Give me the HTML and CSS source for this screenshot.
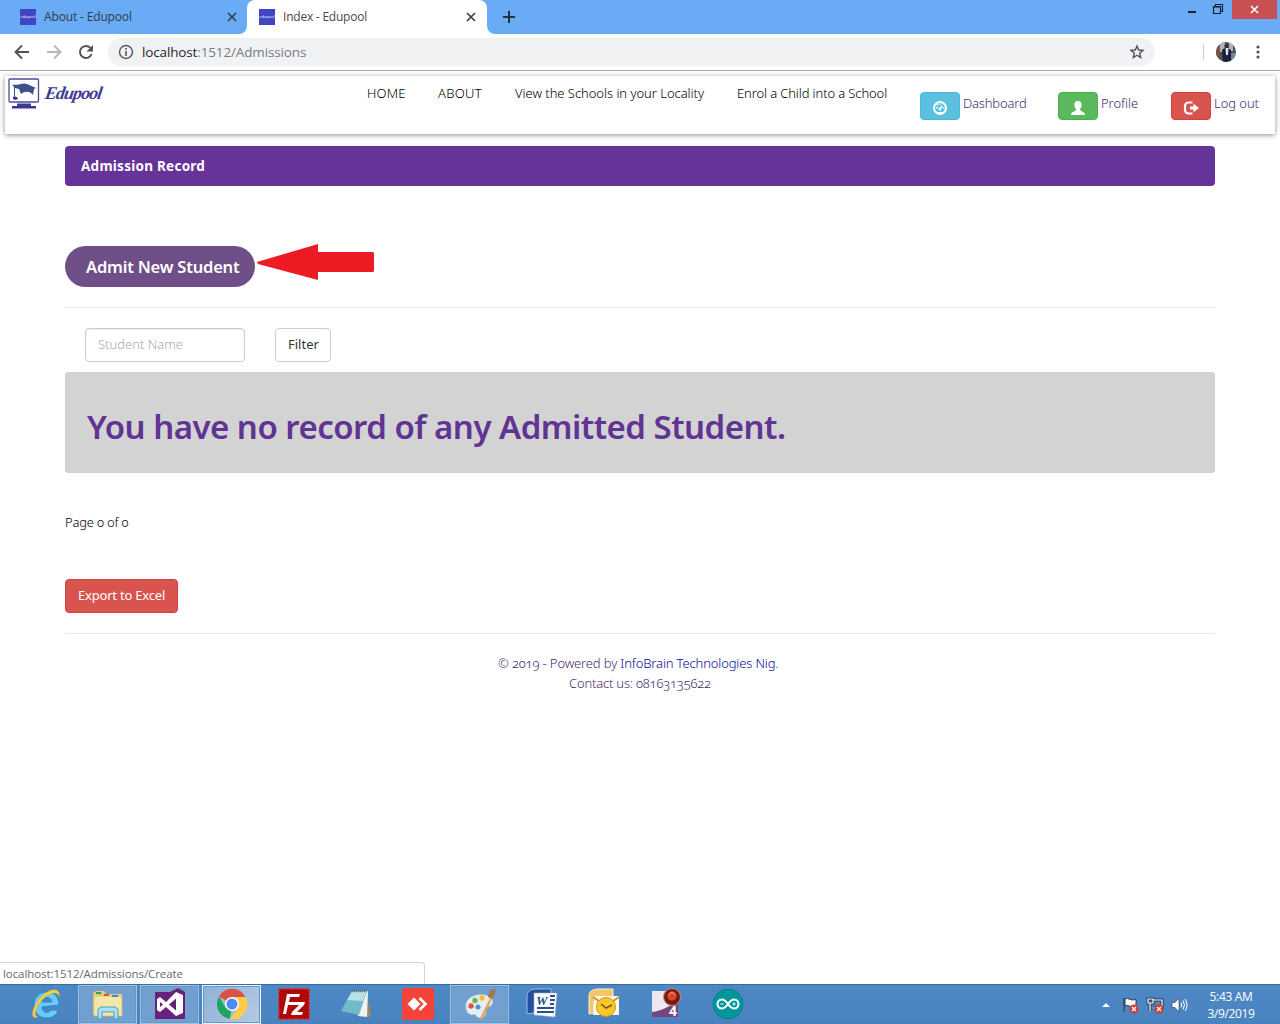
FILE: index.html
```html
<!DOCTYPE html>
<html lang="en">
<head>
<meta charset="utf-8">
<title>Index - Edupool</title>
<link rel="stylesheet" href="styles.css">
</head>
<body>
<div class="screen">
  <header class="tabstrip">
    <div class="tab"><span class="favicon">edupool</span><span class="tab-title">About - Edupool</span>
      <svg class="tab-close" width="10" height="10" viewBox="0 0 10 10"><path d="M1 1l8 8M9 1L1 9"/></svg></div>
    <div class="tab active"><span class="favicon">edupool</span><span class="tab-title t2">Index - Edupool</span>
      <svg class="tab-close" width="10" height="10" viewBox="0 0 10 10"><path d="M1 1l8 8M9 1L1 9"/></svg></div>
    <div class="strip-rest">
    <svg class="plus" width="12" height="12" viewBox="0 0 12 12"><path d="M6 0v12M0 6h12"/></svg>
    <div class="window-buttons">
      <svg width="44" height="19" viewBox="0 0 44 19"><path d="M0 11h8v2H0z" fill="#15212f"/><path d="M25.500 6.500h7v7h-7zM25 7h8M27.500 6V4.500h7v7H33" fill="none" stroke="#15212f" stroke-width="1.200"/></svg>
      <span class="win-close"><svg width="9" height="9" viewBox="0 0 9 9"><path d="M1 1l7 7M8 1L1 8" stroke="#fff" stroke-width="1.600"/></svg></span>
    </div>
    </div>
  </header>
  <div class="toolbar">
    <svg class="nav-icons" width="108" height="36" viewBox="0 0 108 36" fill="none" stroke="#505357" stroke-width="1.900">
      <path d="M29 18H16M22 11.500L15.500 18l6.500 6.500"/>
      <path d="M47 18h13M54 11.500l6.500 6.500-6.500 6.500" stroke="#b5b7ba"/>
      <path d="M90.500 14A6 6 0 1 0 91.600 20"/><path d="M93 11v6.500h-6.500z" fill="#505357" stroke="none"/>
    </svg>
    <div class="address">
      <svg width="16" height="16" viewBox="0 0 16 16"><circle cx="8" cy="8" r="6.500" fill="none" stroke="#55585c" stroke-width="1.400"/><path d="M7.200 7h1.600v5H7.200zM7.200 4h1.600v1.700H7.200z" fill="#55585c"/></svg>
      <span class="url"><span class="host">localhost</span>:1512/Admissions</span>
      <svg class="star" width="16" height="16" viewBox="0 0 16 16"><path d="M8 2l1.700 4 4.300.3-3.300 2.900 1 4.300L8 11.200l-3.700 2.300 1-4.300L2 6.300 6.300 6z" fill="none" stroke="#505357" stroke-width="1.400"/></svg>
    </div>
    <span class="separator"></span>
    <svg class="avatar" width="20" height="20" viewBox="0 0 20 20"><defs><clipPath id="face"><circle cx="10" cy="10" r="10"/></clipPath></defs><g clip-path="url(#face)"><path fill="#4b5260" d="M0 0h20v20H0z"/><path fill="#80503f" d="M0 4h4v12H0z"/><path fill="#aeb5ba" d="M4 0h5v10H4zM13 1h4v8h-4z"/><path fill="#1c2138" d="M6 8l4-3 5 3v12H7z"/><circle cx="10.500" cy="4" r="2.200" fill="#3c2e2d"/><path fill="#d7e5f4" d="M9.500 6h3l-.5 7h-2z"/><path fill="#71849b" d="M15 11h4v6h-4z"/></g></svg>
    <svg class="dots" width="4" height="14" viewBox="0 0 4 14" fill="#505357"><circle cx="2" cy="2" r="1.600"/><circle cx="2" cy="7" r="1.600"/><circle cx="2" cy="12" r="1.600"/></svg>
  </div>

  <main class="page">
    <nav class="navbar">
      <div class="brand">
        <svg width="32" height="32" viewBox="0 0 32 32"><rect x="1" y="1" width="29.500" height="23" rx="1" fill="#fff" stroke="#4d4b98" stroke-width="1.300"/><path d="M4 6.500C10 8 15 4 19 6l9 4-2 1c0 2-1 4-1 6-3-4-8-4-12-1l-2-5-4-1v8l2 3H5l1-3V9z" fill="#3d508b"/><path d="M5 19h4l1 2-3 1-2-1z" fill="#3b378f"/><path d="M9 25.500h14V28h5v2.500H4V28h5z" fill="#3d3a91"/></svg>
        <span class="wordmark">Edupool</span>
      </div>
      <a class="link home">HOME</a><a class="link about">ABOUT</a><a class="link schools">View the Schools in your Locality</a><a class="link enrol">Enrol a Child into a School</a>
      <a class="account dashboard"><span class="badge blue"><svg width="16" height="16" viewBox="0 0 16 16"><circle cx="8" cy="8" r="6" fill="none" stroke="#fff" stroke-width="2"/><path d="M7.500 3h1v2h-1zM4 7h2v1.200H4zM10.500 7h2v1.200h-2zM4.500 4.500l1-.8 1 1.300-1 .8zM7 8l3.500-3.500L9 9.500A1.300 1.300 0 1 1 7 8zM5 12h6v1H5z" fill="#fff"/></svg></span><span class="account-text">Dashboard</span></a>
      <a class="account profile"><span class="badge green"><svg width="16" height="16" viewBox="0 0 16 16"><path d="M8 1c2.500 0 3.600 1.500 3.600 4 0 1.800-.7 3-1.500 4v1.300c0 .8 5 1.500 5 4.700H1c0-3.200 4.900-3.900 4.900-4.700V9c-.8-1-1.500-2.200-1.500-4C4.400 2.500 5.500 1 8 1z" fill="#fff"/></svg></span><span class="account-text">Profile</span></a>
      <a class="account logout"><span class="badge red"><svg width="16" height="16" viewBox="0 0 16 16"><path d="M9.500 2.500H5.500a3.500 3.500 0 0 0-3.500 3.500v4a3.500 3.500 0 0 0 3.500 3.500h4" fill="none" stroke="#fff" stroke-width="2.200"/><path d="M7 6.500h3.500V3.700L16 8l-5.500 4.300V9.500H7z" fill="#fff"/></svg></span><span class="account-text">Log out</span></a>
    </nav>

    <div class="container">
      <h1 class="panel-title"><span>Admission Record</span></h1>
      <div class="admit-row">
        <a class="admit"><span>Admit New Student</span></a>
        <svg width="118" height="36" viewBox="0 0 118 36"><path d="M0 18L61 0v8h55l1 1v18l-1 1H61v8L1 20z" fill="#ed1c24"/></svg>
      </div>
      <div class="filters"><span class="field"><span>Student Name</span></span><a class="filter"><span>Filter</span></a></div>
      <div class="well"><h2><span>You have no record of any Admitted Student.</span></h2></div>
      <p class="pages"><span>Page 0 of 0</span></p>
      <a class="export"><span>Export to Excel</span></a>
      <footer class="footer">
        <p class="powered">© 2019 - Powered by <a>InfoBrain Technologies Nig.</a></p>
        <p class="contact">Contact us: 08163135622</p>
      </footer>
    </div>
    <div class="status"><span>localhost:1512/Admissions/Create</span></div>
  </main>

  <div class="taskbar">
    <div class="task"><svg viewBox="0 0 32 32"><path d="M29 17c0-8-5-13-12-13S4 9 4 17s5 13 13 13c5 0 10-3 11-8h-7c-2 4-9 3-9-3zM12 14c1-6 9-6 10 0z" fill="#6bcbf4" stroke="#258bd0"/><path d="M8 29C-1 33 2 18 11 9 21-1 31 0 29 9c0-6-8-5-15 1S2 28 8 29z" fill="#f4d34b" stroke="#d4a922" stroke-width=".5"/></svg></div>
    <div class="task open"><svg viewBox="0 0 32 32"><path d="M1 5l3-2h8l2 3h16v21H1z" fill="#e5cd78"/><path d="M2 8h28v20H2z" fill="#f6e6a8" stroke="#d3b966" stroke-width=".7"/><path d="M4 4h5v2H4z" fill="#28a64c"/><path d="M12 6h5v2h-5z" fill="#d95737"/><path d="M20 7h6v2h-6z" fill="#3a8cc8"/><path d="M6 31V21l3-2h14l3 2v10h-4v-7H10v7z" fill="#a6e0f2" stroke="#4c9fc5"/></svg></div>
    <div class="task open"><svg viewBox="0 0 32 32"><path d="M1 4h15l8-4 7 4v27H1z" fill="#68217a"/><path d="M3 11l3-2 6 5L22 4l7 3v18l-7 3-10-9-6 5-3-2zm3 3v5l3-2.500zm9 2.500l7 6v-12z" fill="#fff" fill-rule="evenodd"/></svg></div>
    <div class="task open current"><svg viewBox="0 0 32 32"><path d="M16 16L3 8.500A15 15 0 0 1 29.500 9H16z" fill="#dd5144"/><path d="M16 16l-2 15A15 15 0 0 1 3 8.500l6.500 11z" fill="#1fa463"/><path d="M29.500 9A15 15 0 0 1 14 31l8.500-11.500L20 9z" fill="#ffcd46"/><circle cx="16" cy="16" r="7" fill="#fff"/><circle cx="16" cy="16" r="5.500" fill="#4c8bf5"/></svg></div>
    <div class="task"><svg viewBox="0 0 32 32"><rect x=".7" y=".7" width="30.600" height="30.600" fill="#b00708" stroke="#d2424c" stroke-width="1.400" stroke-dasharray="2 1.500"/><path d="M5 26l4-20h13l-1 3h-9l-1 5h7l-1 3h-7l-2 9zM16 14h11l-1 3-7 7h6l-1 3H13l1-3 7-7h-6z" fill="#fff"/></svg></div>
    <div class="task"><svg viewBox="0 0 32 32"><path d="M27 8l4 19-4 3z" fill="#a38755"/><path d="M12 3h16l-1 26-9-1z" fill="#edf4f5"/><path d="M12 3h15l-8 24L1 23z" fill="#72bac8"/><path d="M12 4h14l-3 9-16-1z" fill="#b9e2e6"/><path d="M12 3h16" stroke="#61757d" stroke-width="2.500" stroke-dasharray="1 1"/></svg></div>
    <div class="task"><svg viewBox="0 0 32 32"><rect width="32" height="32" rx="3" fill="#f6433a"/><path d="M12 9.500l6.500 6.500-6.500 6.500L5.500 16z" fill="#fff"/><path d="M17.500 10l6 6-6 6" fill="none" stroke="#fff" stroke-width="2.600"/></svg></div>
    <div class="task open paint"><svg viewBox="0 0 32 32"><path d="M2 20C0 10 12 5 21 7c11 2 9 12 2 12-3 0-2 3-1 5 0 5-5 7-9 5-1-3-4-3-5-2-4-1-6-4-6-7z" fill="#e4eef4" stroke="#afc4d2"/><circle cx="7" cy="18" r="2.700" fill="#e35548"/><circle cx="11" cy="12.500" r="2.700" fill="#70b940"/><circle cx="18" cy="10" r="2.700" fill="#f5be37"/><circle cx="14" cy="19" r="2.500" fill="#588fc6"/><path d="M26 10l2 1-9 19-3 2 1-4z" fill="#e6a557"/><path d="M24 9c1-6 3-8 8-8-2 3 0 6-4 10z" fill="#a6764f"/></svg></div>
    <div class="task"><svg viewBox="0 0 32 32"><path d="M1 26V7c1-5 5-6 10-6h14v21z" fill="#264fa0" stroke="#9bbce7"/><path d="M8 5l23 0-2 24-21-2z" fill="#fff" stroke="#9daec2" stroke-width=".6"/><path d="M24 8h5M24 12h5M24 16h4M11 20h17M11 24h17" stroke="#2a4e8e" stroke-width="1.800"/><text x="10" y="17" class="word-letter">W</text></svg></div>
    <div class="task"><svg viewBox="0 0 32 32"><path d="M1 26V7c1-5 5-6 10-6h14v20z" fill="#f3c66c" stroke="#fff1c0"/><path d="M6 8h25v19H5z" fill="#fff9e8"/><path d="M5 9l13 9 13-9" fill="none" stroke="#c6912b" stroke-width="2"/><circle cx="18" cy="19" r="9.500" fill="#f6c82e" stroke="#d49317"/><path d="M13 16l5 4 6-3" fill="none" stroke="#79521b" stroke-width="1.500"/></svg></div>
    <div class="task"><svg viewBox="0 0 32 32"><path d="M2 3h26v26H2z" fill="#efe6f0"/><path d="M2 24c10-1 17-6 26-11v16H2z" fill="#78457c"/><circle cx="22" cy="9" r="8.500" fill="#791711" stroke="#bb9185"/><circle cx="22" cy="8" r="4.700" fill="#db4228"/><path d="M19 7c1-3 5-3 6 0" stroke="#f4ad74" fill="none"/><text x="19" y="28" class="four">4</text></svg></div>
    <div class="task"><svg viewBox="0 0 32 32"><circle cx="16" cy="16" r="15" fill="#00979c" stroke="#167d87"/><path d="M16 16c-2.500-3.500-4-4.500-6-4.500a4.500 4.500 0 0 0 0 9c2 0 3.500-1 6-4.500 2.500-3.500 4-4.500 6-4.500a4.500 4.500 0 0 1 0 9c-2 0-3.500-1-6-4.500z" fill="none" stroke="#fff" stroke-width="2"/><path d="M8.500 16h3M20.500 16h3M22 14.500v3" stroke="#fff"/></svg></div>
    <svg class="tray" width="90" height="20" viewBox="0 0 90 20"><path d="M0 12l4-4 4 4z" fill="#fff"/><path d="M22 3v14M23 4c4-2 6 3 11 0v7c-5 3-7-2-11 0z" fill="#fff" stroke="#24364d" stroke-width="1"/><path d="M46 4h5v4h-5zM48 8v8M51 5h9v8h-9" fill="none" stroke="#24364d" stroke-width="3"/><path d="M46 4h5v4h-5zM48 8v8M51 5h9v8h-9" fill="none" stroke="#fff" stroke-width="1.200"/><circle cx="32" cy="14" r="4.500" fill="#d83830"/><path d="M30 12l4 4M34 12l-4 4" stroke="#fff" stroke-width="1.400"/><circle cx="57" cy="14" r="4.500" fill="#d83830"/><path d="M55 12l4 4M59 12l-4 4" stroke="#fff" stroke-width="1.400"/><path d="M70 7.500h3l4-4.500v14l-4-4.500h-3z" fill="#fff" stroke="#33485f" stroke-width=".7"/><path d="M79 7.500q1.500 2.500 0 5M81 5.500q3 4.500 0 9M83 4q4 6 0 12" fill="none" stroke="#fff"/></svg>
    <div class="clock"><span>5:43 AM</span><span>3/9/2019</span></div>
  </div>
</div>
</body>
</html>
```
FILE: styles.css
```css
* { box-sizing: border-box; }
body { margin: 0; font-family: "Noto Sans", sans-serif; font-size: 13px; color: #000; }
p, h1, h2 { margin: 0; }
svg { display: block; flex: none; }
.screen { width: 1280px; height: 1024px; overflow: hidden; display: flex; flex-direction: column; background: #fff; white-space: nowrap; }
.tabstrip { height: 34px; flex: none; display: flex; background: linear-gradient(#6aabf6 50%, #fff 50%); font-family: "Open Sans", sans-serif; }
.tab { width: 247px; display: flex; align-items: center; padding-left: 20px; background: #6aabf6; border-bottom-right-radius: 8px; }
.tab.active { width: 240px; padding-left: 12px; background: #fff; border-radius: 8px 8px 0 0; }
.strip-rest { flex: 1; display: flex; align-items: flex-start; background: #6aabf6; border-bottom-left-radius: 8px; }
.favicon { width: 16px; height: 16px; background: #4045c4; color: #fff; font-size: 4px; line-height: 15px; text-align: center; flex: none; }
.tab-title { margin-left: 8px; width: 183px; font-size: 12px; line-height: 16px; padding-bottom: 1px; color: #303b47; letter-spacing: -.15px; }
.tab-title.t2 { color: #45494d; letter-spacing: -.22px; }
.tab-close { stroke: #35414e; stroke-width: 1.700; fill: none; }
.plus { margin: 11px 0 0 16px; stroke: #28323d; stroke-width: 2; }
.window-buttons { display: flex; margin-left: auto; padding-right: 3px; }
.win-close { width: 45px; height: 19px; display: grid; place-items: center; background: #c75050; }
.toolbar { height: 37px; flex: none; display: flex; align-items: center; border-bottom: 1px solid #a9a9a9; }
.address { width: 1047px; height: 28px; border-radius: 14px; background: #f1f2f4; display: flex; align-items: center; padding: 0 10px; }
.url { margin-left: 8px; font: 13.500px "Open Sans", sans-serif; color: #777c83; letter-spacing: -.14px; }
.host { color: #25282b; }
.star { margin-left: auto; }
.separator { width: 1px; height: 16px; background: #c8cace; margin-left: 48px; }
.avatar { margin-left: 12px; }
.dots { margin-left: 20px; }
.page { height: 913px; flex: none; display: flex; flex-direction: column; }
.navbar { height: 58px; flex: none; margin: 5px 5px 0; display: flex; align-items: flex-start; box-shadow: 0 1px 5px rgba(0,0,0,.45); padding-top: 2px; font-weight: 350; }
.brand { width: 362px; display: flex; padding-left: 3px; }
.wordmark { margin-left: 5px; font: italic 700 18px/31px "Liberation Serif", serif; color: #3f3c91; letter-spacing: -.95px; transform: skewX(-9deg); transform-origin: left center; }
.link { padding-top: 6px; line-height: 18px; }
.home { width: 71px; letter-spacing: .2px; }
.about { width: 77px; letter-spacing: .3px; }
.schools { width: 222px; letter-spacing: -.04px; }
.enrol { width: 183px; letter-spacing: -.12px; }
.account { display: flex; padding-top: 14px; color: #452a6e; letter-spacing: -.18px; }
.dashboard { width: 138px; }
.profile { width: 113px; }
.profile, .logout { letter-spacing: -.06px; }
.badge { width: 40px; height: 28px; border: 1px solid; border-radius: 4px; display: grid; place-items: center; padding-top: 3px; }
.blue { background: #5bc0de; border-color: #46b8da; }
.green { background: #5cb85c; border-color: #4cae4c; }
.red { background: #d9534f; border-color: #d43f3a; }
.account-text { margin-left: 3px; line-height: 23px; }
.container { width: 1150px; margin: 12px 0 0 65px; }
.panel-title { height: 40px; border-radius: 4px; background: #663399; color: #fff; padding-left: 16px; font-size: 13.500px; line-height: 40px; font-weight: 700; letter-spacing: .26px; }
.admit-row { height: 122px; padding-top: 58px; display: flex; gap: 2px; border-bottom: 1px solid #eaeaea; }
.admit { width: 190px; height: 41px; margin-top: 2px; border-radius: 21px; background: #6f4f88; color: #fff; font-size: 16.500px; font-weight: 600; line-height: 42px; padding-left: 21px; letter-spacing: -.2px; }
.filters { height: 64px; padding: 20px 0 0 20px; display: flex; gap: 30px; }
.field { width: 160px; height: 34px; border: 1px solid #ccc; border-radius: 4px; padding-left: 12px; line-height: 31px; color: #aaa; font-weight: 300; box-shadow: inset 0 1px 1px rgba(0,0,0,.08); }
.filter { width: 56px; height: 34px; border: 1px solid #ccc; border-radius: 4px; padding-left: 12px; line-height: 31px; color: #333; }
.well { height: 101px; border-radius: 4px; background: #d3d3d3; box-shadow: inset 0 0 0 1px #d0d0d0; padding: 33px 0 0 22px; }
.well h2 { font-size: 33px; line-height: 44px; font-weight: 600; color: #613393; letter-spacing: -.52px; }
.pages { margin-top: 39px; line-height: 20px; font-weight: 350; letter-spacing: -.18px; }
.export { display: block; width: 113px; height: 34px; margin-top: 47px; background: #d9534f; border: 1px solid #c9443f; border-radius: 4px; color: #fff; padding-left: 12px; line-height: 31px; letter-spacing: -.2px; }
.footer { margin-top: 20px; border-top: 1px solid #eaeaea; padding-top: 19px; color: #452a6e; line-height: 20px; font-weight: 350; letter-spacing: -.14px; }
.powered { padding-left: 433px; }
.powered a { color: #0808a0; }
.contact { padding-left: 504px; letter-spacing: -.19px; }
.pages, .footer { font-feature-settings: "onum"; }
.status { width: 425px; height: 22px; margin-top: auto; border: 1px solid #d4d4d4; border-width: 1px 1px 0 0; border-top-right-radius: 4px; padding-left: 3px; font: 11.500px/22px "Open Sans", sans-serif; color: #66696d; letter-spacing: -.08px; }
.taskbar { height: 40px; flex: none; display: flex; align-items: flex-start; padding-left: 16px; gap: 3px; background: linear-gradient(#4d88c6, #4983bf); border-top: 1px solid #376c9f; }
.task { width: 59px; height: 39px; flex: none; display: grid; place-items: center; padding-bottom: 1px; }
.task > svg { width: 32px; height: 32px; }
.open { border: 1px solid #a1c1e1; background: #719fd0; box-shadow: inset 0 0 0 1px #6797c8; }
.current { border-color: #eaf4fc; background: linear-gradient(120deg, #8fb1d8, #b5cae3); }
.word-letter { font: italic bold 13px "Liberation Serif", serif; fill: #254c93; }
.four { font: bold 14px "Open Sans", sans-serif; fill: #fff; }
.tray { margin: 10px 0 0 auto; }
.clock { width: 88px; display: flex; flex-direction: column; align-items: center; font: 12px/17px "Open Sans", sans-serif; color: #fff; letter-spacing: -.35px; padding: 3px 13px 0 0; }
.clock { width: 85px; }
```
